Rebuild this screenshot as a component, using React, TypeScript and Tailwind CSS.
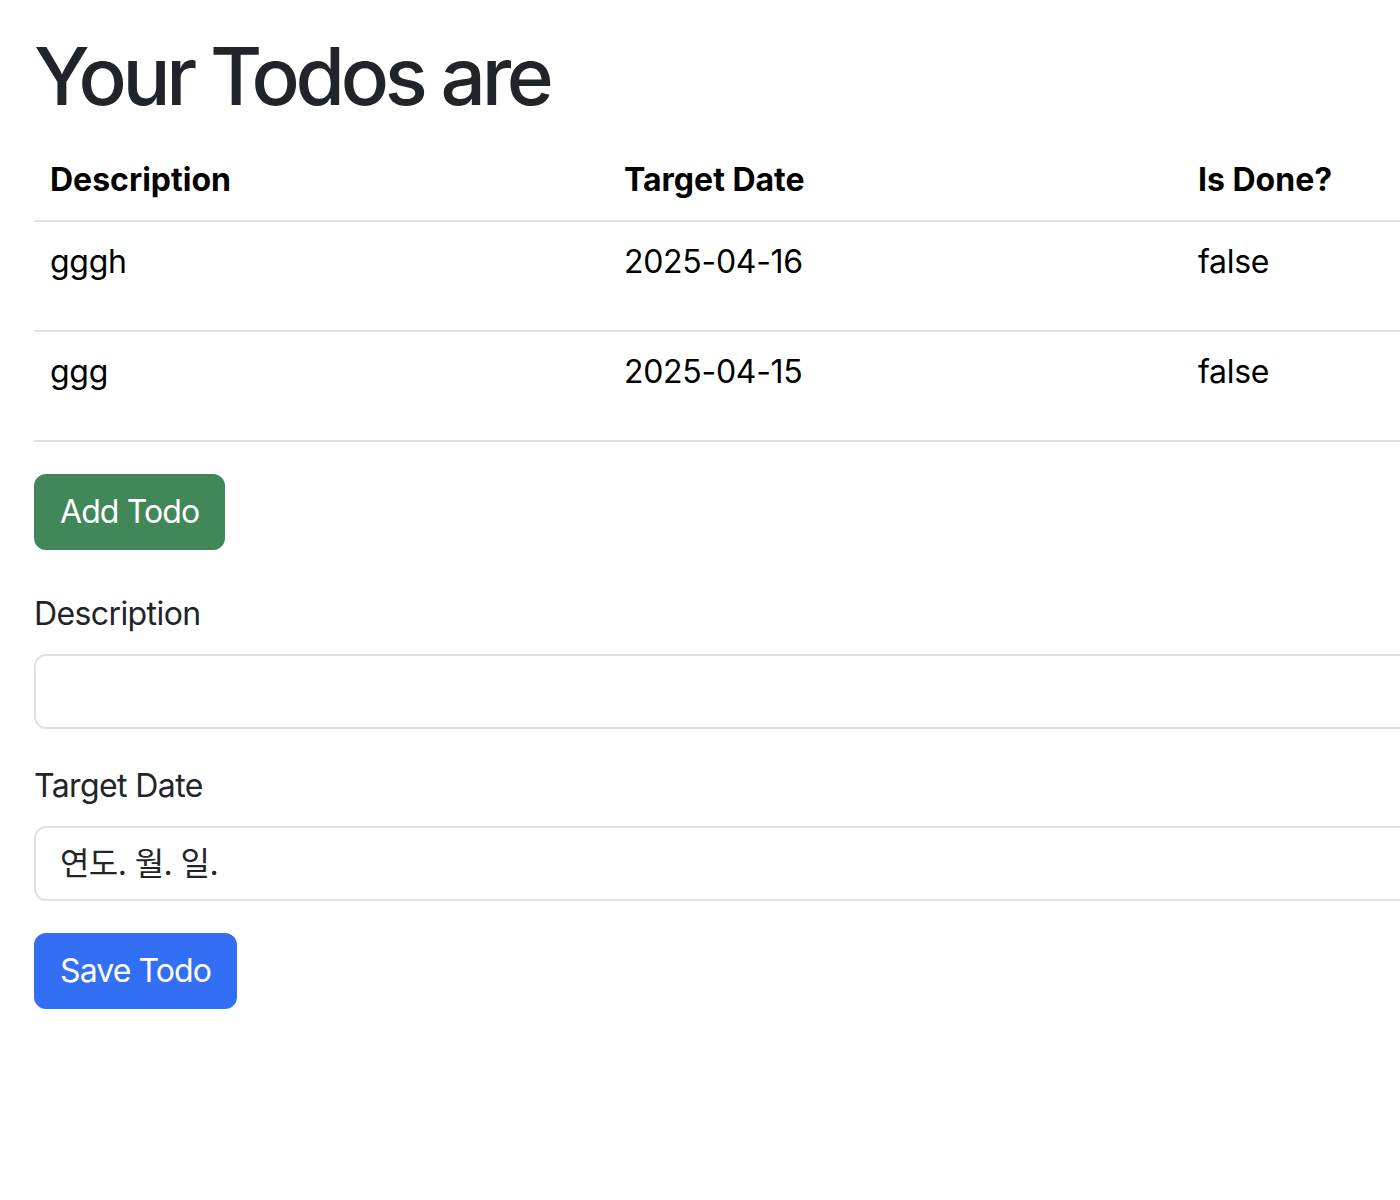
import React from "react";

const todos = [
  { description: "gggh", targetDate: "2025-04-16", done: false },
  { description: "ggg", targetDate: "2025-04-15", done: false },
];

export default function App() {
  return (
    <div
      className="w-[1400px] min-h-[1200px] overflow-hidden bg-white text-[32px] leading-[48px] text-[#212529]"
      style={{ fontFamily: "Inter, 'Noto Sans CJK KR', sans-serif" }}
    >
      <div className="pl-[34px] pt-[28px] w-[1756px]">
        <h1 className="text-[80px] leading-[96px] font-medium tracking-[-4.3px] mb-4">Your Todos are</h1>

        <table className="w-[1722px] border-collapse text-black table-fixed">
          <thead>
            <tr className="border-b-2 border-[#dee2e6]">
              <th className="text-left font-bold px-4 py-4 w-[574px]">Description</th>
              <th className="text-left font-bold px-4 py-4 w-[574px]">Target Date</th>
              <th className="text-left font-bold px-4 py-4 w-[574px]">Is Done?</th>
            </tr>
          </thead>
          <tbody>
            {todos.map((todo, i) => (
              <tr key={i} className="border-b-2 border-[#dee2e6] tracking-[-0.3px]">
                <td className="align-top px-4 pt-4 pb-[44px]">{todo.description}</td>
                <td className="align-top px-4 pt-4 pb-[44px]">{todo.targetDate}</td>
                <td className="align-top px-4 pt-4 pb-[44px]">{todo.done.toString()}</td>
              </tr>
            ))}
          </tbody>
        </table>

        <button className="mt-8 rounded-xl border-2 border-[#41875a] bg-[#41875a] px-6 py-3 text-white tracking-[-0.9px]">
          Add Todo
        </button>

        <div className="mt-[40px]">
          <label className="block mb-4 tracking-[-0.6px]">Description</label>
          <div className="w-[1722px] h-[75px] rounded-xl border-2 border-[#dee2e6]" />
        </div>

        <div className="mt-[33px]">
          <label className="block mb-4 tracking-[-0.6px]">Target Date</label>
          <div className="w-[1722px] h-[75px] rounded-xl border-2 border-[#dee2e6] px-6 flex items-center tracking-[-0.6px]">
            연도. 월. 일.
          </div>
        </div>

        <button className="mt-[32px] rounded-xl border-2 border-[#326ff5] bg-[#326ff5] px-6 py-3 text-white tracking-[-0.9px]">
          Save Todo
        </button>
      </div>
    </div>
  );
}
